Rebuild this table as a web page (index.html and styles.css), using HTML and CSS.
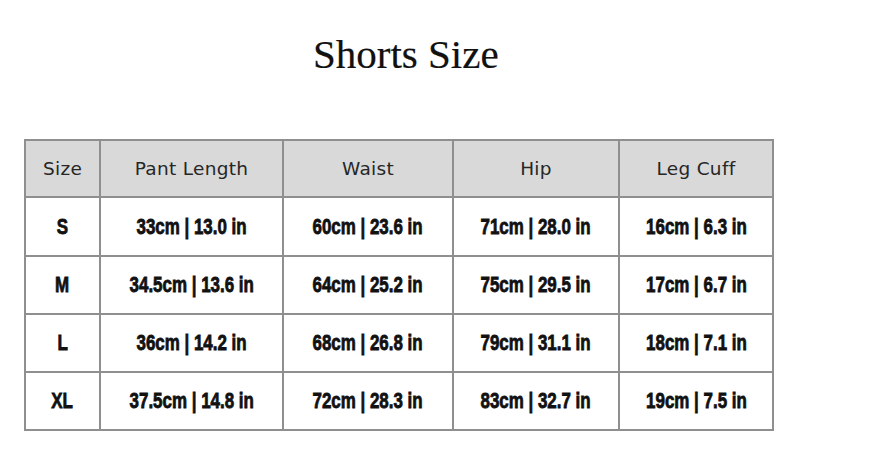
FILE: index.html
```html
<!DOCTYPE html>
<html>
<head>
<meta charset="utf-8">
<link rel="stylesheet" href="styles.css">
</head>
<body>
<div class="page">
  <h1 class="title">Shorts Size</h1>
  <div class="chart">
    <div class="cell head">Size</div>
    <div class="cell head">Pant Length</div>
    <div class="cell head">Waist</div>
    <div class="cell head">Hip</div>
    <div class="cell head">Leg Cuff</div>

    <div class="cell val"><span>S</span></div>
    <div class="cell val"><span>33cm | 13.0 in</span></div>
    <div class="cell val"><span>60cm | 23.6 in</span></div>
    <div class="cell val"><span>71cm | 28.0 in</span></div>
    <div class="cell val"><span>16cm | 6.3 in</span></div>

    <div class="cell val"><span>M</span></div>
    <div class="cell val"><span>34.5cm | 13.6 in</span></div>
    <div class="cell val"><span>64cm | 25.2 in</span></div>
    <div class="cell val"><span>75cm | 29.5 in</span></div>
    <div class="cell val"><span>17cm | 6.7 in</span></div>

    <div class="cell val"><span>L</span></div>
    <div class="cell val"><span>36cm | 14.2 in</span></div>
    <div class="cell val"><span>68cm | 26.8 in</span></div>
    <div class="cell val"><span>79cm | 31.1 in</span></div>
    <div class="cell val"><span>18cm | 7.1 in</span></div>

    <div class="cell val"><span>XL</span></div>
    <div class="cell val"><span>37.5cm | 14.8 in</span></div>
    <div class="cell val"><span>72cm | 28.3 in</span></div>
    <div class="cell val"><span>83cm | 32.7 in</span></div>
    <div class="cell val"><span>19cm | 7.5 in</span></div>
  </div>
</div>
</body>
</html>
```
FILE: styles.css
```css
html, body {
  margin: 0;
  padding: 0;
  background: #ffffff;
}
.page {
  width: 891px;
  height: 472px;
  display: flex;
  flex-direction: column;
}
.title {
  margin: 30px 0 0 0;
  padding-left: 313px;
  height: 48px;
  font-family: "Liberation Serif", "DejaVu Serif", serif;
  font-weight: normal;
  font-size: 41px;
  line-height: 48px;
  color: #111;
  -webkit-text-stroke: 0.2px #111;
}
.chart {
  margin: 61px 0 0 24px;
  width: 750px;
  box-sizing: border-box;
  display: grid;
  grid-template-columns: 73px 181px 168px 164px 152px;
  grid-template-rows: 55px 57px 56px 56px 56px;
  gap: 2px;
  padding: 2px;
  background: #8f8f8f;
}
.cell {
  display: flex;
  align-items: center;
  justify-content: center;
  background: #ffffff;
  white-space: nowrap;
}
.head {
  background: #d9d9d9;
  font-family: "DejaVu Sans", "Noto Sans", sans-serif;
  font-size: 18.5px;
  color: #262626;
  letter-spacing: 0.3px;
}
.val {
  font-family: "Liberation Sans", "Arial", sans-serif;
  font-weight: bold;
  font-size: 22px;
  color: #111;
}
.val span {
  display: inline-block;
  transform: scaleX(0.77);
  -webkit-text-stroke: 0.8px #111;
}
```
